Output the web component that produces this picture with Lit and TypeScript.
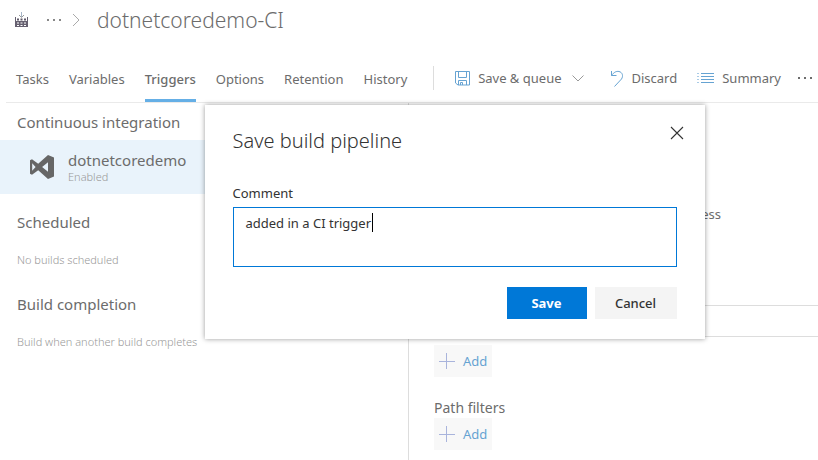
import { LitElement, html, css, svg } from "lit";
import { customElement, state } from "lit/decorators.js";
import { classMap } from "lit/directives/class-map.js";

const icon = (w: number, h: number, body: unknown) =>
  html`<svg width=${w} height=${h} viewBox="0 0 ${w} ${h}" fill="none" stroke="currentColor" aria-hidden="true">${body}</svg>`;

const icons = {
  build: icon(14, 16, svg`
    <path d="M7.500 0v5" stroke="#a5b5c8"/>
    <path d="M5 3l2.500 2.500L10 3" stroke="#999"/>
    <path d="M1 5h1v4h11V5h1v10H1z" fill="#666070" stroke="none"/>
    <path d="M3 7.500h2M6.500 7.500h2M10 7.500h2" stroke="#5f5868" stroke-width="2"/>
    <path d="M3 11h2M6.500 11h2M10 11h2M3 13.500h2M6.500 13.500h2M10 13.500h2" stroke="#fff"/>`),
  crumb: icon(8, 14, svg`<path d="M1 1l6 6-6 6" stroke="#aaa"/>`),
  dots: icon(16, 4, svg`<path d="M1 1h2v2H1zM7 1h2v2H7zM13 1h2v2h-2z" fill="currentColor" stroke="none"/>`),
  save: icon(15, 15, svg`
    <path d="M.5.5h14v13.500H3L.5 12V.5z"/>
    <path d="M3.500 1v5.500h8V1" />
    <path d="M3.500 14V9.500h8V14M5.500 14v-2.500h2V14"/>`),
  chevron: icon(12, 7, svg`<path d="M.5.5L6 6 11.500.5" stroke="#999"/>`),
  undo: icon(14, 17, svg`<path d="M1.500 1v4.500h5"/><path d="M1.500 5.500C4 2 6.500 1 9 1.500c3.500.8 4.500 4.500 2.500 7.500L4.500 16.500"/>`),
  list: icon(17, 12, svg`
    <path d="M4 1.500h13M4 4.500h13M4 7.500h13M4 10.500h13"/>
    <path d="M0 1.500h2M0 4.500h2M0 7.500h2M0 10.500h2" stroke="#a9cbe6"/>`),
  close: icon(14, 14, svg`<path d="M1 1l12 12M13 1L1 13" stroke="#333" stroke-width="1.100"/>`),
  plus: icon(16, 16, svg`<path d="M0 8.500h16M7.500 0v16" stroke="#a9b4dc"/>`),
  studio: icon(24, 24, svg`
    <path fill-rule="evenodd" fill="#666" stroke="none"
      d="M18 0l6 2.400v19.200L18 24 8.200 15.200 2 19.800 0 18.700V5.300l2-1.100 6.200 4.600zM18 7.200l-5.900 4.800 5.900 4.800zM2.200 8.300v7.400L5.600 12z"/>`),
};

@customElement("app-root")
export class AppRoot extends LitElement {
  @state() private open = true;
  @state() private tab = "Triggers";
  @state() private comment = "added in a CI trigger";

  static styles = css`
    :host {
      display: block;
      position: relative;
      min-height: 100vh;
      overflow: hidden;
      background: #fff;
      color: #6c6c6c;
      font: 13px/20px "Noto Sans", "Open Sans", sans-serif;
    }
    * { box-sizing: border-box; }
    svg { display: block; flex: none; }
    h1, h2, h3, p { margin: 0; font-weight: 400; }
    button {
      display: flex;
      align-items: center;
      margin: 0;
      padding: 0;
      border: 0;
      background: none;
      color: inherit;
      font: inherit;
      white-space: nowrap;
      cursor: pointer;
    }
    .page { display: flex; flex-direction: column; min-height: 100vh; }
    .crumbs { display: flex; align-items: center; height: 40px; padding-left: 14px; }
    .crumbs .more { margin: 0 10px 0 18px; color: #888; }
    .crumbs h1 { margin-left: 17px; font-size: 21px; line-height: 40px; font-weight: 300; }
    .bar {
      display: flex;
      justify-content: space-between;
      height: 63px;
      margin-left: 6px;
      padding: 16px 5px 0 10px;
      border-bottom: 1px solid #eaeaea;
    }
    .tabs { display: flex; gap: 20px; }
    .tab { height: 46px; padding-top: 2px; border-bottom: 3px solid transparent; }
    .tab.on { border-color: #65afe6; font-weight: 500; }
    .commands { display: flex; align-items: center; height: 44px; }
    .commands button { gap: 8px; }
    .rule { width: 1px; height: 24px; margin-right: 21px; background: #ddd; }
    .blue svg:first-child { color: #66a3d2; }
    .queue { margin-right: 26px; }
    .queue svg:last-child { margin-left: 2px; }
    .discard { margin-right: 20px; }
    .summary { margin-right: 16px; }
    .body { display: flex; flex: 1; }
    nav { flex: 0 0 50%; border-right: 1px solid #ddd; }
    nav h2 { padding: 9px 17px 8px; font-size: 15px; }
    nav p { padding: 10px 17px 15px; color: #999; font-size: 11px; font-weight: 300; }
    .repo { width: 100%; height: 54px; gap: 14px; padding-left: 30px; margin-bottom: 9px; background: #e9f3fb; text-align: left; }
    .repo span { display: block; }
    .repo .name { font-size: 15px; }
    .repo .status { color: #999; font-size: 11px; line-height: 14px; font-weight: 300; }
    main { flex: 1; padding: 101px 0 0 25px; }
    .batch { width: 287px; text-align: right; }
    .branch {
      display: block;
      width: 100%;
      height: 32px;
      margin: 81px 0 8px;
      border: 1px solid #ddd;
      border-right: 0;
      background: #fff;
      font: inherit;
    }
    .add { height: 32px; gap: 8px; padding: 0 5px; background: #f8f8f8; color: #66a3d2; }
    main h3 { margin-top: 21px; font-size: 14px; }
    .dialog {
      position: absolute;
      top: 105px;
      left: 25%;
      width: 500px;
      padding: 20px 28px;
      background: #fff;
      color: #333;
      box-shadow: 0 0 5px rgba(0, 0, 0, 0.4);
    }
    .head { display: flex; align-items: flex-start; justify-content: space-between; margin-right: -14px; }
    .head h2 { font-size: 20px; line-height: 32px; font-weight: 300; }
    .head button { justify-content: center; width: 28px; height: 16px; }
    .dialog label { display: block; margin: 26px 0 4px; }
    .field { position: relative; }
    textarea {
      display: block;
      width: 100%;
      height: 60px;
      padding: 5px 12px;
      border: 1px solid #0078d7;
      outline: 0;
      resize: none;
      color: #333;
      font: inherit;
    }
    .caret { position: absolute; top: 6px; left: 139px; width: 1px; height: 19px; background: #000; }
    .actions { display: flex; justify-content: flex-end; gap: 8px; margin-top: 20px; }
    .actions button { justify-content: center; width: 82px; height: 32px; background: #f4f4f4; font-weight: 500; }
    .actions .primary { width: 80px; background: #0078d7; color: #fff; font-weight: 700; }
  `;

  private close() {
    this.open = false;
  }

  render() {
    return html`
      <div class="page">
        <header>
          <div class="crumbs">
            ${icons.build}
            <button class="more" aria-label="More">${icons.dots}</button>
            ${icons.crumb}
            <h1>dotnetcoredemo-CI</h1>
          </div>
          <div class="bar">
            <div class="tabs">
              ${["Tasks", "Variables", "Triggers", "Options", "Retention", "History"].map(
                (t) => html`<button class=${classMap({ tab: true, on: t === this.tab })} @click=${() => (this.tab = t)}>${t}</button>`
              )}
            </div>
            <div class="commands">
              <span class="rule"></span>
              <button class="blue queue" @click=${() => (this.open = true)}>${icons.save}Save &amp; queue${icons.chevron}</button>
              <button class="blue discard">${icons.undo}Discard</button>
              <button class="blue summary">${icons.list}Summary</button>
              <button aria-label="More commands">${icons.dots}</button>
            </div>
          </div>
        </header>
        <div class="body">
          <nav>
            <h2>Continuous integration</h2>
            <button class="repo">
              ${icons.studio}
              <span><span class="name">dotnetcoredemo</span><span class="status">Enabled</span></span>
            </button>
            <h2>Scheduled</h2>
            <p>No builds scheduled</p>
            <h2>Build completion</h2>
            <p>Build when another build completes</p>
          </nav>
          <main>
            <p class="batch">progress</p>
            <input class="branch" aria-label="Branch" />
            <button class="add">${icons.plus}Add</button>
            <h3>Path filters</h3>
            <button class="add">${icons.plus}Add</button>
          </main>
        </div>
      </div>
      ${this.open
        ? html`<section class="dialog" role="dialog" aria-labelledby="title">
            <div class="head">
              <h2 id="title">Save build pipeline</h2>
              <button aria-label="Close" @click=${this.close}>${icons.close}</button>
            </div>
            <label for="comment">Comment</label>
            <div class="field">
              <textarea
                id="comment"
                .value=${this.comment}
                @input=${(e: Event) => (this.comment = (e.target as HTMLTextAreaElement).value)}
              ></textarea>
              <span class="caret"></span>
            </div>
            <div class="actions">
              <button class="primary" @click=${this.close}>Save</button>
              <button @click=${this.close}>Cancel</button>
            </div>
          </section>`
        : null}
    `;
  }
}
